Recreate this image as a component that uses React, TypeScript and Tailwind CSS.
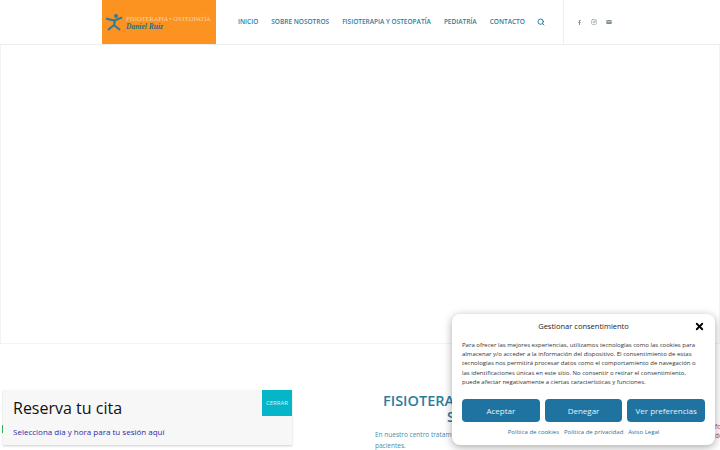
import { Instagram, Search, X } from "lucide-react";
import { FaFacebookF } from "react-icons/fa";
import { IoMdMail } from "react-icons/io";

const links = ["INICIO", "SOBRE NOSOTROS", "FISIOTERAPIA Y OSTEOPATÍA", "PEDIATRÍA", "CONTACTO"];

export default function App() {
  return (
    <div className="relative w-[720px] h-[450px] overflow-hidden bg-white font-['Open_Sans',sans-serif]">
      <header className="h-[45px] flex border-b border-[#eeeeee] pl-[102px]">
        <div className="w-[114px] h-[44px] bg-[#fc9220] flex items-center pl-[3px] shrink-0">
          <svg width="20" height="20" viewBox="0 0 20 20" className="shrink-0">
            <circle cx="11" cy="4" r="2" fill="#2f7c9e" />
            <path d="M1 6.5 L9 8.5 L17 5.5 M10 8.5 L9 13 L3 18 M9 13 L15 18" stroke="#2f7c9e" strokeWidth="2.2" fill="none" />
          </svg>
          <div className="ml-[1px] leading-[8px] pt-[1px]">
            <div className="font-['Liberation_Serif',serif] text-[6.3px] text-[#f3d7a8] whitespace-nowrap">FISIOTERAPIA • OSTEOPATÍA</div>
            <div className="font-['Liberation_Serif',serif] italic font-bold text-[7.5px] text-[#1f6d92] whitespace-nowrap">Daniel Ruiz</div>
          </div>
        </div>
        <nav className="flex items-center gap-[13px] ml-[22px] h-[44px] text-[#2f7c9e] text-[6.5px] font-semibold whitespace-nowrap">
          {links.map((l) => (
            <span key={l}>{l}</span>
          ))}
          <Search size={8} strokeWidth={3} className="-ml-[1px]" />
        </nav>
        <div className="ml-[18px] h-[44px] border-l border-[#eeeeee] flex items-center gap-[9px] pl-[13px] text-[#7c8a92]">
          <FaFacebookF size={5} />
          <Instagram size={6} />
          <IoMdMail size={6} />
        </div>
      </header>

      <section className="h-[299px] border-b border-x border-[#f3f3f3]" />

      <section className="pl-[375px] pt-[49px]">
        {/* the rest of this heading sits behind the cookie modal */}
        <h2 className="pl-[8px] text-[#2f7c9e] text-[14.5px] leading-[16px] font-semibold whitespace-nowrap">
          FISIOTERAPIA EN
          <span className="block pl-[64px]">SEVILLA</span>
        </h2>
        <p className="mt-[5px] text-[6.5px] leading-[10.5px] text-[#4a8ba8] whitespace-nowrap">
          En nuestro centro tratamos a todos nuestros
          <br />
          pacientes.
        </p>
      </section>

      {/* reserva popup */}
      <div className="absolute left-[3px] top-[390px] w-[289px] h-[55px] bg-[#f7f7f7] shadow-[0_1px_2px_rgba(0,0,0,0.2)] pl-[10px] pt-[8px]">
        <div className="text-[#111] text-[16px] leading-[20px]">Reserva tu cita</div>
        <div className="mt-[8px] text-[#2b2ba8] text-[8px] leading-[12px]">Selecciona día y hora para tu sesión aquí</div>
        <div className="absolute right-0 top-0 w-[30px] h-[26px] bg-[#07b5c9] text-[#d8f4f7] text-[6px] flex items-center justify-center">CERRAR</div>
      </div>
      <div className="absolute left-[2px] top-[425px] w-[1px] h-[8px] bg-[#35b558]" />

      {/* recaptcha peek */}
      <div className="absolute left-[715px] top-[423px] text-[#d0323a] text-[6.5px] leading-[8.5px]">
        fo
        <br />
        do
      </div>

      {/* cookie modal */}
      <div className="absolute left-[452px] top-[314px] w-[263px] h-[131px] bg-white rounded-[8px] shadow-[0_2px_8px_rgba(0,0,0,0.35)] px-[10px]">
        <div className="relative pt-[7px] text-center text-[#222] text-[7.5px] leading-[11px]">
          Gestionar consentimiento
          <X size={11} strokeWidth={4} className="absolute right-[0px] top-[7px] text-black" />
        </div>
        <p className="mt-[9px] text-[#333] text-[6px] leading-[9.2px] whitespace-nowrap">
          Para ofrecer las mejores experiencias, utilizamos tecnologías como las cookies para
          <br />
          almacenar y/o acceder a la información del dispositivo. El consentimiento de estas
          <br />
          tecnologías nos permitirá procesar datos como el comportamiento de navegación o
          <br />
          las identificaciones únicas en este sitio. No consentir o retirar el consentimiento,
          <br />
          puede afectar negativamente a ciertas características y funciones.
        </p>
        <div className="mt-[12px] flex gap-[5px]">
          <button className="w-[78px] h-[23px] bg-[#1e73a0] rounded-[4px] text-[#e8f2f7] text-[8px]">Aceptar</button>
          <button className="w-[78px] h-[23px] bg-[#1e73a0] rounded-[4px] text-[#e8f2f7] text-[8px]">Denegar</button>
          <button className="w-[78px] h-[23px] bg-[#1e73a0] rounded-[4px] text-[#e8f2f7] text-[8px]">Ver preferencias</button>
        </div>
        <div className="mt-[5px] flex justify-center gap-[5px] text-[#1e73a0] text-[6px] leading-[11px]">
          <span>Política de cookies</span>
          <span>Política de privacidad</span>
          <span>Aviso Legal</span>
        </div>
      </div>
    </div>
  );
}
